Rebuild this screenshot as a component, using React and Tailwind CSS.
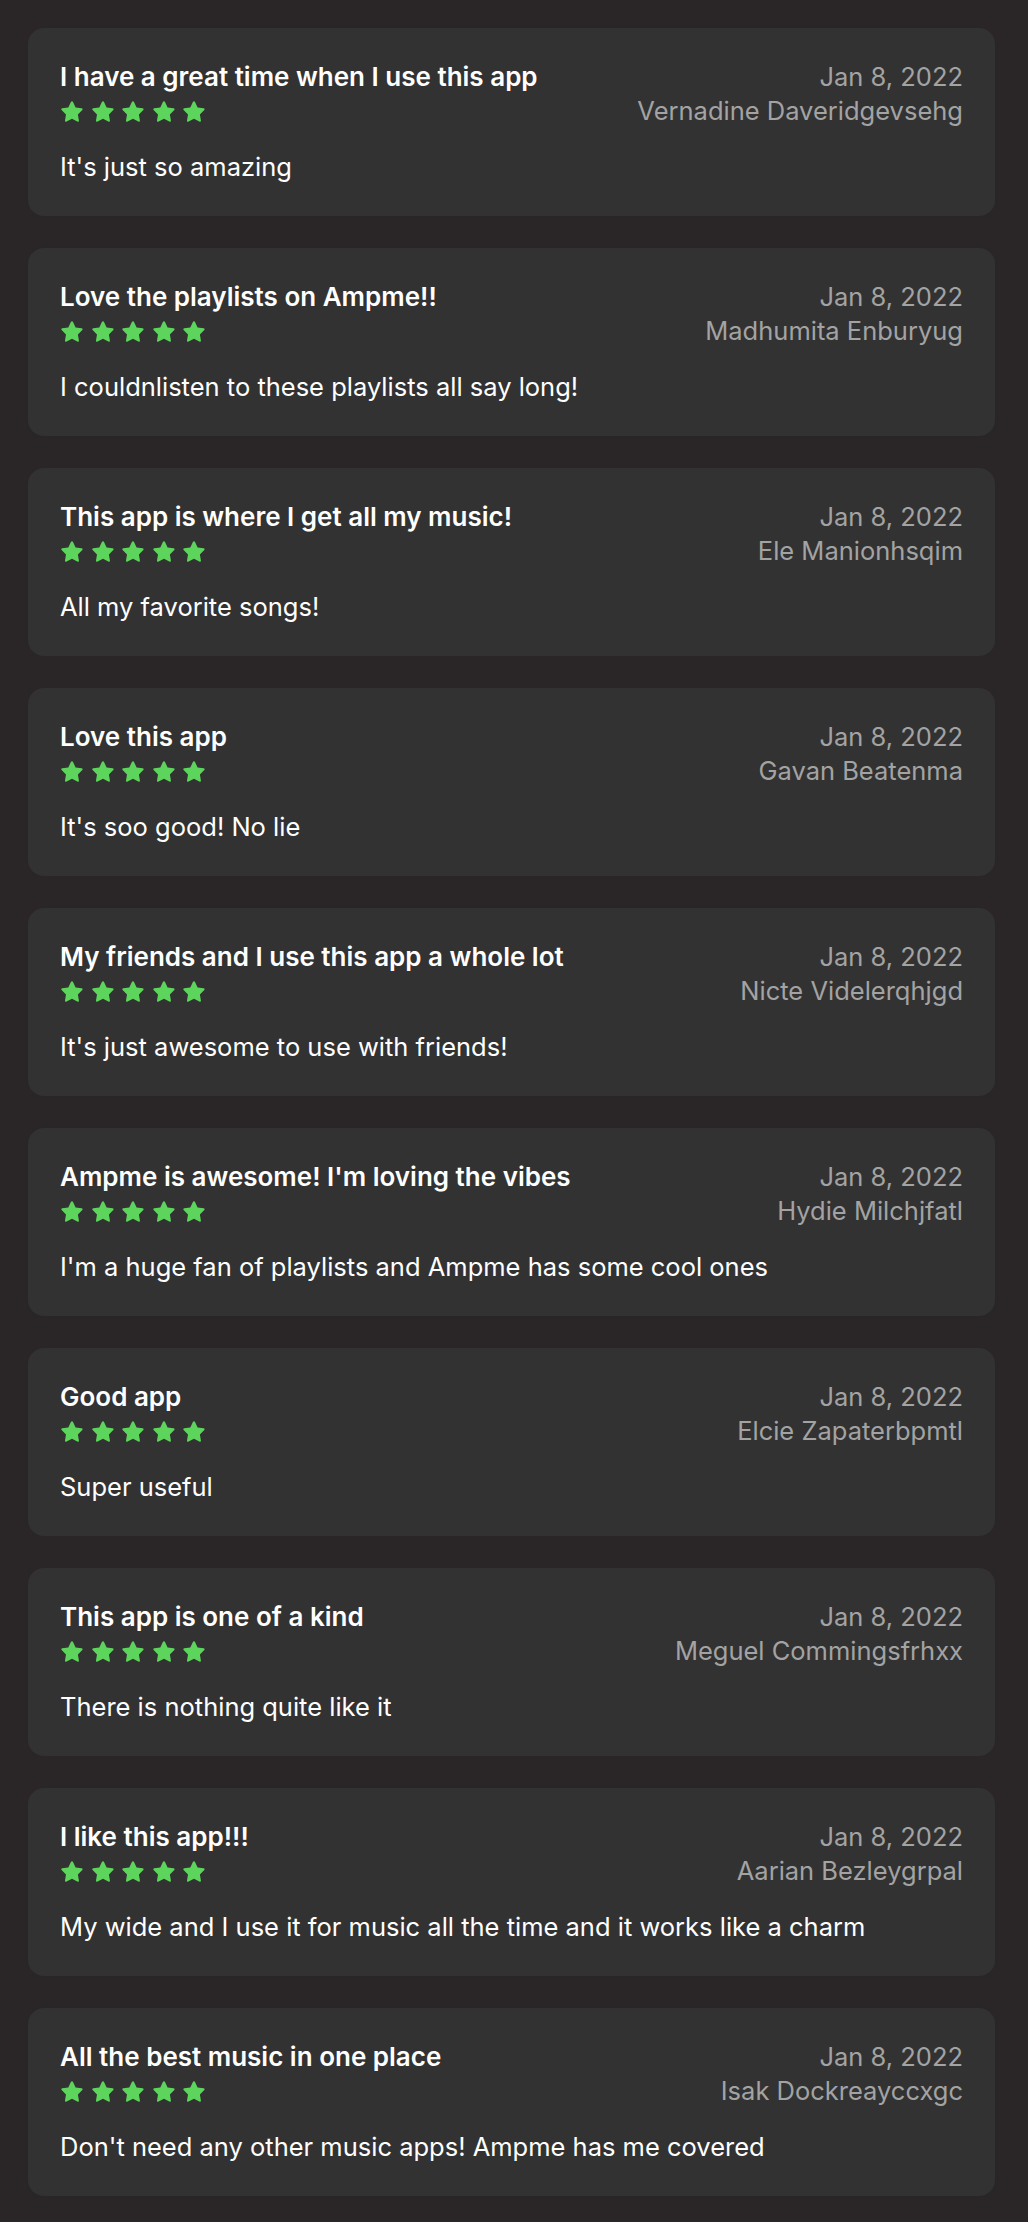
import React from "react";

const reviews = [
  ["I have a great time when I use this app", "Vernadine Daveridgevsehg", "It's just so amazing"],
  ["Love the playlists on Ampme!!", "Madhumita Enburyug", "I couldnlisten to these playlists all say long!"],
  ["This app is where I get all my music!", "Ele Manionhsqim", "All my favorite songs!"],
  ["Love this app", "Gavan Beatenma", "It's soo good! No lie"],
  ["My friends and I use this app a whole lot", "Nicte Videlerqhjgd", "It's just awesome to use with friends!"],
  ["Ampme is awesome! I'm loving the vibes", "Hydie Milchjfatl", "I'm a huge fan of playlists and Ampme has some cool ones"],
  ["Good app", "Elcie Zapaterbpmtl", "Super useful"],
  ["This app is one of a kind", "Meguel Commingsfrhxx", "There is nothing quite like it"],
  ["I like this app!!!", "Aarian Bezleygrpal", "My wide and I use it for music all the time and it works like a charm"],
  ["All the best music in one place", "Isak Dockreayccxgc", "Don't need any other music apps! Ampme has me covered"],
];

function Star() {
  return (
    <svg width="24" height="23" viewBox="0 0 24 23" className="block">
      <path
        d="M12 1.2c.4 0 .7.2.9.6l2.7 5.6 6.1.9c.9.1 1.2 1.2.6 1.8l-4.4 4.3 1 6.1c.2.9-.8 1.6-1.6 1.1L12 18.8l-5.4 2.8c-.8.5-1.8-.2-1.6-1.1l1-6.1-4.4-4.3c-.6-.6-.3-1.7.6-1.8l6.1-.9 2.7-5.6c.2-.4.6-.6 1-.6z"
        fill="#5dd55c"
      />
    </svg>
  );
}

function Card({ title, name, body }) {
  return (
    <div className="w-[967px] rounded-[16px] bg-[#323232] px-[32px] pt-[32px] pb-[32px]">
      <div className="flex justify-between items-start">
        <div className="flex flex-col">
          <div className="h-[34px] leading-[34px] text-[26px] font-semibold text-white">{title}</div>
          <div className="h-[34px] flex items-center gap-[6.5px]">
            <Star /><Star /><Star /><Star /><Star />
          </div>
        </div>
        <div className="flex flex-col items-end text-[25.5px] leading-[34px] text-[#a3a3a3]">
          <div>Jan 8, 2022</div>
          <div>{name}</div>
        </div>
      </div>
      <div className="mt-[22px] text-[25.5px] leading-[34px] text-white">{body}</div>
    </div>
  );
}

export default function App() {
  return (
    <div
      className="min-h-[2222px] bg-[#2a2627] pl-[28px] pt-[28px] flex flex-col gap-[32px]"
      style={{ fontFamily: "Inter, 'Liberation Sans', sans-serif" }}
    >
      {reviews.map((r, i) => (
        <Card key={i} title={r[0]} name={r[1]} body={r[2]} />
      ))}
    </div>
  );
}
